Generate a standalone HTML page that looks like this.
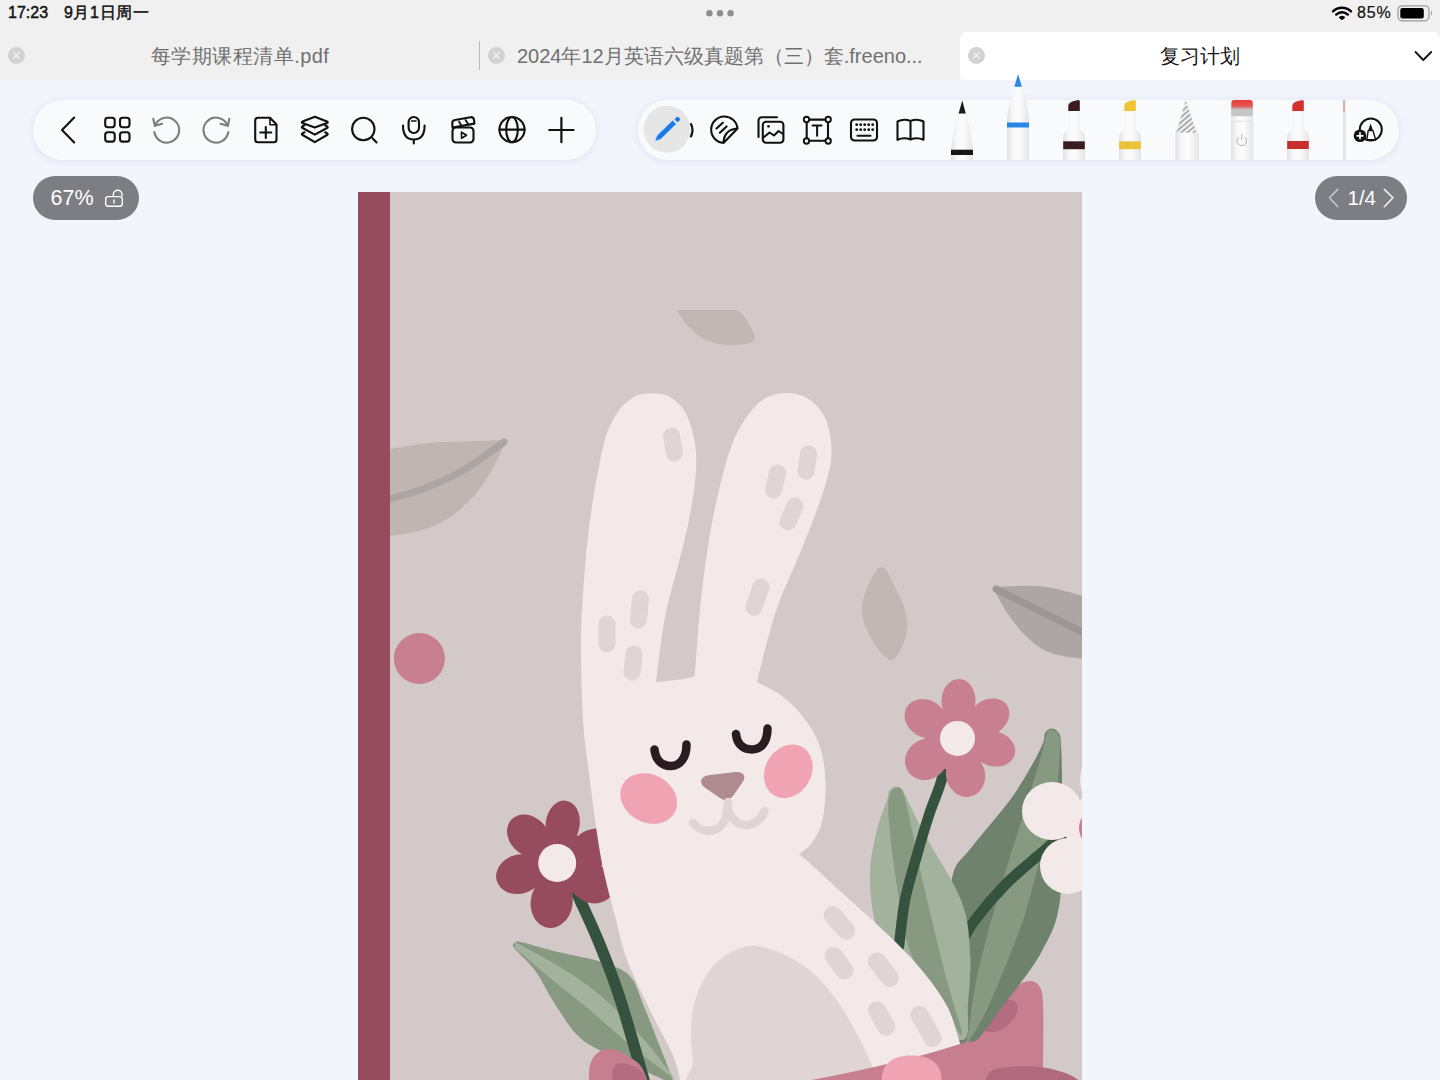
<!DOCTYPE html>
<html><head><meta charset="utf-8">
<style>
*{margin:0;padding:0;box-sizing:border-box}
html,body{width:1440px;height:1080px;overflow:hidden;background:#f2f5fc;font-family:"Liberation Sans",sans-serif}
.abs{position:absolute}
#top{left:0;top:0;width:1440px;height:80px;background:#f0f0f0}
.st{top:3px;font-size:16px;font-weight:normal;-webkit-text-stroke:0.45px #111;color:#111;line-height:20px}
.tabt{top:44px;font-size:20px;color:#707070;line-height:24px;white-space:nowrap}
.xc{width:17px;height:17px;border-radius:50%;background:#d2d2d2}
.xc:before,.xc:after{content:"";position:absolute;left:4.2px;top:7.8px;width:8.6px;height:1.4px;background:#fff;transform:rotate(45deg)}
.xc:after{transform:rotate(-45deg)}
.pill{background:#f9fafc;border-radius:30px;box-shadow:0 1px 10px rgba(30,40,90,0.09)}
.gp{background:#7c7e83;border-radius:22px;color:#fff}
</style></head><body>
<div id="top" class="abs"></div>
<div class="abs st" style="left:8px">17:23</div>
<div class="abs st" style="left:64px;letter-spacing:0.6px">9月1日周一</div>
<svg class="abs" style="left:700px;top:8px" width="40" height="10"><circle cx="9.4" cy="5.3" r="3.2" fill="#8e8e8e"/><circle cx="20" cy="5.3" r="3.2" fill="#8e8e8e"/><circle cx="30.6" cy="5.3" r="3.2" fill="#8e8e8e"/></svg>
<!-- status right -->
<svg class="abs" style="left:1330px;top:5px" width="24" height="17" viewBox="0 0 24 17">
<path d="M3,6.3 A13,13 0 0 1 21,6.3" stroke="#000" stroke-width="2.4" fill="none" stroke-linecap="round"/>
<path d="M6.2,9.6 A8.2,8.2 0 0 1 17.8,9.6" stroke="#000" stroke-width="2.4" fill="none" stroke-linecap="round"/>
<path d="M12,14.8 L9,12.4 A4.6,4.6 0 0 1 15,12.4 Z" fill="#000" stroke="#000" stroke-width="0.8" stroke-linejoin="round"/>
</svg>
<div class="abs st" style="left:1357px;top:3px;-webkit-text-stroke:0.2px #111;letter-spacing:0.8px">85%</div>
<svg class="abs" style="left:1397px;top:5px" width="38" height="17" viewBox="0 0 38 17">
<rect x="1" y="0.8" width="31" height="15" rx="4" fill="none" stroke="#9a9a9a" stroke-width="1.2"/>
<rect x="3.3" y="3" width="23.5" height="10.5" rx="2" fill="#000"/>
<path d="M34,5.5 Q36,8 34,11 Z" fill="#999"/>
</svg>
<!-- tabs -->
<div class="abs xc" style="left:8px;top:47px"></div>
<div class="abs tabt" style="left:151px;letter-spacing:0.45px">每学期课程清单.pdf</div>
<div class="abs" style="left:479px;top:41px;width:1.2px;height:29px;background:#b8b8b8"></div>
<div class="abs xc" style="left:488px;top:47px"></div>
<div class="abs tabt" style="left:517px">2024年12月英语六级真题第（三）套.freeno...</div>
<div class="abs" style="left:960px;top:32px;width:480px;height:48px;background:#fff;border-radius:7px 7px 0 4px"></div>
<div class="abs xc" style="left:968px;top:47px"></div>
<div class="abs tabt" style="left:1160px;color:#151515">复习计划</div>
<svg class="abs" style="left:1413px;top:48px" width="22" height="16" viewBox="0 0 22 16"><path d="M2.5,4 L10.3,12 L18.2,4" stroke="#111" stroke-width="1.8" fill="none" stroke-linecap="round" stroke-linejoin="round"/></svg>

<!-- toolbars -->
<div class="abs pill" style="left:33px;top:100px;width:563px;height:60px"></div>
<div class="abs pill" style="left:638px;top:100px;width:761px;height:60px"></div>

<!-- zoom & page pills -->
<div class="abs gp" style="left:33px;top:176px;width:106px;height:44px"></div>
<div class="abs" style="left:50.5px;top:185px;font-size:21.5px;color:#fff;line-height:26px">67%</div>
<svg class="abs" style="left:100px;top:184px" width="30" height="28" viewBox="100 184 30 28"><g fill="none" stroke="#fff" stroke-width="1.4" stroke-linecap="round">
<rect x="105.7" y="196.6" width="16.6" height="9.6" rx="2.4"/><path d="M113.3,196.4 L113.3,194.6 A4.4,4.4 0 0 1 122.1,194.6 L122.1,195.6"/><path d="M114,199.9 L114,203"/></g></svg>
<div class="abs gp" style="left:1315px;top:176px;width:92px;height:44px"></div>
<div class="abs" style="left:1347.5px;top:185px;font-size:20.5px;color:#fff;line-height:26px">1/4</div>
<svg class="abs" style="left:1320px;top:184px" width="80" height="28" viewBox="1320 184 80 28"><g fill="none" stroke-width="1.5" stroke-linecap="round" stroke-linejoin="round">
<path d="M1337.8,189.4 L1329.4,197.8 L1337.8,206.8" stroke="#c9cacd"/><path d="M1384.3,189.4 L1393,197.8 L1384.3,206.8" stroke="#f4f4f5"/></g></svg>

<!-- left toolbar icons -->
<svg class="abs" style="left:0;top:80px" width="1440" height="100" viewBox="0 80 1440 100">
<g fill="none" stroke="#111" stroke-width="2.1" stroke-linecap="round" stroke-linejoin="round">
<path d="M74.2,117.5 L62,130 L74.2,142.5"/>
<rect x="105.2" y="117.8" width="9.5" height="9.4" rx="2.6"/><rect x="120" y="117.8" width="9.5" height="9.4" rx="2.6"/>
<rect x="105.2" y="132.2" width="9.5" height="9.4" rx="2.6"/><rect x="120" y="132.2" width="9.5" height="9.4" rx="2.6"/>
<g stroke="#7d7d7d"><path d="M154.3,132 A12.5,12.5 0 1 0 155,125.6"/><path d="M153.3,118.7 L154.8,125.7 L162.2,123.7"/>
<path d="M228.35,132 A12.5,12.5 0 1 1 227.65,125.6"/><path d="M229.35,118.7 L227.85,125.7 L220.45,123.7"/></g>
<path d="M258,117.8 L270,117.8 L276.5,124.5 L276.5,139.5 Q276.5,142.3 273.7,142.3 L258,142.3 Q255.2,142.3 255.2,139.5 L255.2,120.6 Q255.2,117.8 258,117.8 Z"/>
<path d="M270,118 L270,124.7 L276.3,124.7" stroke-width="1.6"/>
<path d="M265.8,127 L265.8,138 M260.3,132.5 L271.3,132.5"/>
<path d="M314.8,116.8 L327,121.5 Q328.5,122.2 327,123 L314.8,127.6 L302.6,123 Q301,122.2 302.6,121.5 Z"/>
<path d="M304.5,125.3 L302.6,126.3 Q301,127.2 302.6,128 L314.8,134.6 L327,128 Q328.5,127.2 327,126.3 L325.1,125.3"/>
<path d="M304.5,132.3 L302.6,133.3 Q301,134.2 302.6,135 L314.8,142.2 L327,135 Q328.5,134.2 327,133.3 L325.1,132.3"/>
<circle cx="363.3" cy="129" r="11.2"/><path d="M372.5,138.2 L376.6,142.4"/>
<rect x="408.6" y="117" width="10.4" height="16" rx="5.2"/><path d="M403,125.5 Q403,139.5 413.8,139.5 Q424.6,139.5 424.6,125.5 M413.8,139.5 L413.8,143.5"/>
<path d="M411.6,121 L416,121" stroke-width="1.5"/>
<rect x="452.5" y="127.5" width="21" height="15" rx="3.5"/>
<path d="M452.5,127.5 L452.3,123.5 Q452,120.5 455,120 L470.5,117.2 Q473.5,116.8 474,119.8 L474.4,123.6 L452.5,127.5"/>
<path d="M459,121.5 L461.5,125.8 M465.5,120 L468.5,124.6" stroke-width="1.8"/>
<path d="M461.5,132.2 L461.5,138.2 L466.5,135.2 Z" stroke-width="1.6"/>
<circle cx="512" cy="129.6" r="12.6"/><ellipse cx="512" cy="129.6" rx="5.8" ry="12.6"/><path d="M499.4,129.6 L524.6,129.6"/>
<path d="M561.4,117.8 L561.4,142.2 M549.2,130 L573.6,130" stroke-width="2.2"/>
</g>
<!-- right toolbar icons -->
<circle cx="667" cy="129.3" r="23.5" fill="#e6e6e6"/>
<path d="M654.9,141.2 L657,135.5 L672.6,120.3 L676.3,124 L660.7,139.2 Z" fill="#1a78e8" stroke="#bfe6ff" stroke-width="0.6"/>
<path d="M674.5,119.4 L676.7,117.2 Q677.6,116.4 678.5,117.2 L679.7,118.4 Q680.5,119.3 679.7,120.2 L677.5,122.3 Z" fill="#1a78e8"/>
<path d="M690.6,123.2 Q694.5,130 690.6,137.2" fill="none" stroke="#111" stroke-width="2.2"/>
<g fill="none" stroke="#111" stroke-width="2.1" stroke-linecap="round" stroke-linejoin="round">
<path d="M723.5,142.9 A13.2,13.2 0 1 1 737.5,128.5 L723.5,142.9 Q724,129.5 737.5,128.5"/>
<path d="M716.5,128.6 L722.8,122.8 M719.8,132.7 L726.6,126.4"/>
<path d="M758.5,137 L758.5,121 Q758.5,117.3 762,117.3 L777,117.3"/>
<rect x="762.8" y="121.8" width="20.6" height="21" rx="3.2"/>
<circle cx="768.5" cy="126.3" r="1.4" fill="#111" stroke="none"/>
<path d="M763.5,137.5 L769.5,132.5 L774,135.5 L778.5,131 L783,134"/>
<rect x="806.7" y="119.6" width="21.3" height="21.2"/>
<path d="M812.6,125.5 L821.6,125.5 M817.1,125.5 L817.1,135.8" stroke-width="2"/>
</g>
<g fill="#fafbfc" stroke="#111" stroke-width="1.9">
<circle cx="806.5" cy="119.5" r="2.7"/><circle cx="828.2" cy="119.5" r="2.7"/><circle cx="806.5" cy="141" r="2.7"/><circle cx="828.2" cy="141" r="2.7"/>
</g>
<g fill="none" stroke="#111" stroke-width="2.1" stroke-linecap="round" stroke-linejoin="round">
<rect x="851" y="119.5" width="26" height="21" rx="3.5"/>
<path d="M857.5,135.8 L870.5,135.8"/>
<path d="M897.5,121.5 Q904,118.2 910.5,121 Q917,118.2 923.5,121.5 L923.5,139.8 Q917,137 910.5,139.5 Q904,137 897.5,139.8 Z M910.5,121 L910.5,139.5"/>
</g>
<g fill="#111">
<circle cx="856.7" cy="124.7" r="1.4"/><circle cx="860.7" cy="124.7" r="1.4"/><circle cx="864.7" cy="124.7" r="1.4"/><circle cx="868.7" cy="124.7" r="1.4"/><circle cx="872.7" cy="124.7" r="1.4"/>
<circle cx="856.7" cy="129.7" r="1.4"/><circle cx="860.7" cy="129.7" r="1.4"/><circle cx="864.7" cy="129.7" r="1.4"/><circle cx="868.7" cy="129.7" r="1.4"/><circle cx="872.7" cy="129.7" r="1.4"/>
</g>
</svg>
<svg class="abs" style="left:940px;top:70px" width="470" height="92" viewBox="940 70 470 92">
<defs>
<linearGradient id="bd" x1="0" x2="1" y1="0" y2="0"><stop offset="0" stop-color="#e2e2e4"/><stop offset="0.25" stop-color="#f7f7f8"/><stop offset="0.55" stop-color="#fdfdfd"/><stop offset="1" stop-color="#e4e4e6"/></linearGradient>
<linearGradient id="er" x1="0" x2="0" y1="0" y2="1"><stop offset="0" stop-color="#ee3b3b"/><stop offset="0.35" stop-color="#e45252"/><stop offset="0.6" stop-color="#c9c9c9"/><stop offset="1" stop-color="#c4c4c4"/></linearGradient>
<pattern id="hatch" width="4" height="4" patternUnits="userSpaceOnUse" patternTransform="rotate(-40)"><rect width="4" height="4" fill="#f2f2f2"/><rect width="4" height="1.5" fill="#9a9a9a"/></pattern>
</defs>
<!-- pen1 black fineliner -->
<path d="M958.6,113.3 L965.8,113.3 Q972,135 973,150 L973,160 L951,160 L951,150 Q952.5,135 958.6,113.3 Z" fill="url(#bd)"/>
<path d="M962.2,100.6 L965.8,113.4 L958.6,113.4 Z" fill="#1a1a1a"/>
<rect x="951" y="149.7" width="22" height="5.3" fill="#161616"/>
<!-- pen2 blue -->
<path d="M1014.5,86.7 L1021.8,86.7 Q1028,104 1029,118 L1029,160 L1007,160 L1007,118 Q1008,104 1014.5,86.7 Z" fill="url(#bd)"/>
<path d="M1018.1,74 L1021.9,86.8 L1014.4,86.8 Z" fill="#2b86ea"/>
<rect x="1007" y="122.5" width="22" height="5" fill="#2a86e6"/>
<!-- pen3 brown marker -->
<path d="M1068.3,111 L1079.7,111 L1080,129 Q1085,132 1085,138 L1085,160 L1063,160 L1063,138 Q1063,132 1068,129 Z" fill="url(#bd)"/>
<path d="M1068.3,111 L1068.3,105.5 Q1069,102.5 1073,101.3 L1078.5,100 Q1079.8,100 1079.8,101.5 L1079.8,111 Z" fill="#3a1a1e"/>
<rect x="1063.2" y="141.3" width="21.6" height="7.9" fill="#3c1c1f"/>
<!-- pen4 yellow marker -->
<path d="M1124.3,111 L1135.7,111 L1136,129 Q1141,132 1141,138 L1141,160 L1119,160 L1119,138 Q1119,132 1124,129 Z" fill="url(#bd)"/>
<path d="M1124.3,111 L1124.3,105.5 Q1125,102.5 1129,101.3 L1134.5,100 Q1135.8,100 1135.8,101.5 L1135.8,111 Z" fill="#f1c232"/>
<rect x="1119.2" y="141.3" width="21.6" height="7.9" fill="#ecc23a"/>
<!-- pen5 pencil -->
<rect x="1175.4" y="132.8" width="23.6" height="27.2" fill="url(#bd)"/>
<path d="M1185.8,100.2 L1196.6,132.8 L1176.1,132.8 Z" fill="url(#hatch)"/>
<!-- pen6 eraser -->
<rect x="1231.3" y="100" width="21.5" height="16.5" rx="3" fill="url(#er)"/>
<rect x="1231.3" y="110" width="21.5" height="6.5" fill="#c6c6c6"/>
<rect x="1231" y="116.3" width="22.3" height="43.7" fill="url(#bd)"/>
<path d="M1231.3,121.3 L1252.8,121.3" stroke="#e0e0e0" stroke-width="0.8"/>
<path d="M1238.3,137.5 A4.8,4.8 0 1 0 1245.2,137.5 M1241.7,134.5 L1241.7,139.6" fill="none" stroke="#b0b0b0" stroke-width="1" stroke-linecap="round"/>
<!-- pen7 red marker -->
<path d="M1292.3,111 L1303.7,111 L1304,129 Q1309,132 1309,138 L1309,160 L1287,160 L1287,138 Q1287,132 1292,129 Z" fill="url(#bd)"/>
<path d="M1292.3,111 L1292.3,105.5 Q1293,102.5 1297,101.3 L1302.5,100 Q1303.8,100 1303.8,101.5 L1303.8,111 Z" fill="#d3302e"/>
<rect x="1287.2" y="141" width="21.6" height="8" fill="#c8302f"/>
<!-- partial pen8 -->
<rect x="1343" y="100" width="2.6" height="60" fill="#e2e2e2"/>
<rect x="1343.2" y="100" width="1.6" height="12" fill="#e4a09c"/>
<!-- add pen icon -->
<circle cx="1370.8" cy="129.6" r="11" fill="none" stroke="#111" stroke-width="2"/>
<path d="M1370.6,123.5 L1373,130.6 L1368.2,130.6 Z" fill="#111"/>
<path d="M1368.2,130.6 L1373,130.6 L1375.6,139.8 L1366.8,139.8 Z" fill="#fff" stroke="#111" stroke-width="1.4" stroke-linejoin="round"/>
<circle cx="1360" cy="135.8" r="6.3" fill="#111"/>
<path d="M1360,132.3 L1360,139.3 M1356.5,135.8 L1363.5,135.8" stroke="#fff" stroke-width="1.7"/>
</svg>
<svg class="abs" style="left:0;top:0" width="1440" height="1080" viewBox="0 0 1440 1080"><defs><clipPath id="pg"><rect x="358" y="192" width="724" height="888"/></clipPath></defs><g clip-path="url(#pg)"><rect x="358" y="192" width="724" height="888" fill="#d3c9c8"/><path d="M676.7,310C686.6,310 726.1,310 736,310C737.2,310.8 740,311 743,315C746,319 752.7,329.4 754,334C755.3,338.6 755.5,340.7 751,342.5C746.5,344.3 734.8,345.6 727,345C719.2,344.4 710.5,342.2 704,339C697.5,335.8 692.5,330.8 688,326C683.5,321.2 678.6,312.7 676.7,310Z" fill="#c1b7b5"/><path d="M380,451C388.3,449.7 413.3,444.7 430,443C446.7,441.3 467.3,441.5 480,441C492.7,440.5 501.7,440.2 506,440C504,444.3 499.3,456.7 494,466C488.7,475.3 482.3,486.8 474,496C465.7,505.2 454.7,514.8 444,521C433.3,527.2 420.7,530.5 410,533C399.3,535.5 385,535.5 380,536Z" fill="#bfb6b4"/><path d="M504,442C497,446.8 476,463 462,471C448,479 432.8,485.2 420,490C407.2,494.8 393.3,497.8 385,500C376.7,502.2 372.5,502.5 370,503" fill="none" stroke="#aca5a4" stroke-width="7" stroke-linecap="round" stroke-linejoin="round"/><path d="M882,567C886.8,567.8 892.8,582.5 897,591C901.2,599.5 905.8,609.5 907,618C908.2,626.5 906.7,635 904,642C901.3,649 896.3,660.3 891,660C885.7,659.7 876.8,648 872,640C867.2,632 862.7,621 862,612C861.3,603 864.7,593.5 868,586C871.3,578.5 877.2,566.2 882,567Z" fill="#c1b7b5"/><path d="M994,587C1002.2,586.9 1027,584.7 1043,586.5C1059,588.3 1082.2,596.1 1090,598C1090,608.3 1090,649.7 1090,660C1083.5,658.8 1061.5,656.8 1051,653C1040.5,649.2 1034.2,643.5 1027,637C1019.8,630.5 1013.5,621.8 1008,614C1002.5,606.2 996.3,594 994,590Z" fill="#aca6a5"/><path d="M996,589C1003.8,592.9 1027.3,604.7 1043,612.5C1058.7,620.3 1082.2,632.1 1090,636" fill="none" stroke="#9c9695" stroke-width="7" stroke-linecap="round" stroke-linejoin="round"/><circle cx="419.4" cy="658.5" r="25.5" fill="#c87f91"/><rect x="358" y="192" width="32" height="888" fill="#964b5f"/><path d="M955,1090 L965,1045 C985,1015 1005,992 1020,984 C1033,977 1041,983 1042.5,996 C1044,1010 1043,1040 1043,1090 Z" fill="#c77e91"/><ellipse cx="1000" cy="1016" rx="21" ry="12" transform="rotate(-40 1000 1016)" fill="#b46c80"/><path d="M1043,743C1045.2,737.7 1043.7,735.4 1045,733C1046.3,730.6 1048.8,728.7 1051,728.5C1053.2,728.3 1056.3,729.4 1058,732C1059.7,734.6 1060.3,732.7 1061,744C1061.7,755.3 1062.2,774 1062,800C1061.8,826 1063.3,874.8 1060,900C1056.7,925.2 1051.2,933.8 1042,951C1032.8,968.2 1017.8,986.8 1005,1003C992.2,1019.2 975,1048.5 965,1048C955,1047.5 948,1019.7 945,1000C942,980.3 945.7,951 947,930C948.3,909 949,887.7 953,874C957,860.3 961.5,860.3 971,848C980.5,835.7 999.8,813.8 1010,800C1020.2,786.2 1026.5,774.5 1032,765C1037.5,755.5 1040.8,748.3 1043,743Z" fill="#6f826e"/><path d="M1045,740C1046.3,735.2 1046.5,732.7 1048,731C1049.5,729.3 1052.2,729.2 1054,730C1055.8,730.8 1058,732.7 1059,736C1060,739.3 1060.8,737.8 1060,750C1059.2,762.2 1058,788.3 1054,809C1050,829.7 1041.5,854.5 1036,874C1030.5,893.5 1028.7,904.5 1021,926C1013.3,947.5 999,983.3 990,1003C981,1022.7 970.5,1039.7 967,1044C963.5,1048.3 967.3,1040.2 969,1029C970.7,1017.8 972.3,998.5 977,977C981.7,955.5 989.7,925.8 997,900C1004.3,874.2 1013.8,845.3 1021,822C1028.2,798.7 1036,773.7 1040,760C1044,746.3 1043.7,744.8 1045,740Z" fill="#879980"/><path d="M1090,815C1085.3,818.5 1070.3,829.5 1062,836C1053.7,842.5 1049.5,845.8 1040,854C1030.5,862.2 1015.8,874 1005,885C994.2,896 982.5,910 975,920C967.5,930 962.5,940.8 960,945" fill="none" stroke="#34523e" stroke-width="10.5" stroke-linecap="round" stroke-linejoin="round"/><path d="M887,800C889,793.5 887.6,793.2 889,791C890.4,788.8 893.3,786.8 895.5,786.5C897.7,786.2 900.2,787.2 902,789C903.8,790.8 902.2,789.3 906,797C909.8,804.7 915.8,817.8 925,835C934.2,852.2 953.5,880.7 961,900C968.5,919.3 968.8,933.8 970,951C971.2,968.2 969.5,988.2 968,1003C966.5,1017.8 972.3,1040.5 961,1040C949.7,1039.5 914.2,1019 900,1000C885.8,981 881,947 876,926C871,905 869.8,890 870,874C870.2,858 874.2,842.3 877,830C879.8,817.7 885,806.5 887,800Z" fill="#a2b29c"/><path d="M895.5,788C897.8,787.3 900.2,786 903,793C905.8,800 908.5,814.3 912,830C915.5,845.7 918.3,862.5 924,887C929.7,911.5 939.7,952.3 946,977C952.3,1001.7 963,1031.2 962,1035C961,1038.8 948.7,1014 940,1000C931.3,986 917.3,971 910,951C902.7,931 899.5,901.5 896,880C892.5,858.5 890.2,835.8 889,822C887.8,808.2 887.9,802.7 889,797C890.1,791.3 893.2,788.7 895.5,788Z" fill="#879980"/><path d="M950,750C948.3,755.8 943.5,774.2 940,785C936.5,795.8 932.8,803.3 929,815C925.2,826.7 921,840.8 917,855C913,869.2 908,884.8 905,900C902,915.2 900,938.3 899,946" fill="none" stroke="#34523e" stroke-width="10.5" stroke-linecap="round" stroke-linejoin="round"/><ellipse cx="958.5" cy="700.9" rx="17" ry="22" transform="rotate(1.5 958.5 700.9)" fill="#c87f91"/><ellipse cx="988.6" cy="717.4" rx="17.5" ry="22" transform="rotate(56 988.6 717.4)" fill="#c87f91"/><ellipse cx="993.5" cy="748.7" rx="17.5" ry="22" transform="rotate(106 993.5 748.7)" fill="#c87f91"/><ellipse cx="965.6" cy="775" rx="19.5" ry="22" transform="rotate(167.5 965.6 775)" fill="#c87f91"/><ellipse cx="926.4" cy="759.4" rx="20" ry="22" transform="rotate(236 926.4 759.4)" fill="#c87f91"/><ellipse cx="925.7" cy="718.5" rx="18.5" ry="22" transform="rotate(302 925.7 718.5)" fill="#c87f91"/><circle cx="957.5" cy="738.4" r="33" fill="#c87f91"/><circle cx="957.5" cy="738.4" r="17.5" fill="#f3e9e9"/><ellipse cx="1052" cy="811" rx="30" ry="29" transform="rotate(0 1052 811)" fill="#f3e9e9"/><circle cx="1068" cy="866" r="28" fill="#f3e9e9"/><ellipse cx="1098" cy="780" rx="18" ry="26" transform="rotate(0 1098 780)" fill="#f3e9e9"/><circle cx="1099" cy="828" r="34" fill="#f3e9e9"/><circle cx="1099" cy="828" r="20" fill="#c87f91"/><path d="M517.5,941C524.7,942.9 546.5,949.1 560.6,952.6C574.7,956.1 590.6,958.4 602.2,962.3C613.8,966.2 623,968.9 630,976.2C637,983.6 639.3,995.6 643.9,1006.4C648.5,1017.2 652.6,1027.9 657.8,1041C663,1054.1 672.1,1077.7 675,1085C668.7,1082.1 648.7,1072.8 637,1067.5C625.3,1062.2 614.8,1058.2 605,1053C595.2,1047.8 586.3,1044.2 578,1036C569.7,1027.8 562,1014.7 555,1004C548,993.3 542.3,980.5 536,971.7C529.7,962.9 520.8,955.5 517,951C513.2,946.5 512.9,946.7 513,945C513.1,943.3 516.8,941.7 517.5,941Z" fill="#879980"/><path d="M515,942C522.5,946.2 545.8,958.2 560,967C574.2,975.8 586.7,983.7 600,995C613.3,1006.3 627.3,1020.8 640,1035C652.7,1049.2 670,1072.5 676,1080C668.3,1074.2 644.3,1056.7 630,1045C615.7,1033.3 602.5,1020.5 590,1010C577.5,999.5 567.5,992.3 555,982C542.5,971.7 521.7,953.7 515,948Z" fill="#a2b29c"/><path d="M566,870C568.3,875 574.3,887.5 580,900C585.7,912.5 593.3,928.4 600,945C606.7,961.6 612.8,976.1 620.3,999.4C627.8,1022.7 641.1,1070.7 645.3,1085" fill="none" stroke="#34523e" stroke-width="11.5" stroke-linecap="round" stroke-linejoin="round"/><ellipse cx="562.7" cy="823.9" rx="17" ry="23.5" transform="rotate(8 562.7 823.9)" fill="#964b5f"/><ellipse cx="528.5" cy="835.8" rx="19" ry="23.5" transform="rotate(-46.5 528.5 835.8)" fill="#964b5f"/><ellipse cx="519.3" cy="874.2" rx="19.5" ry="23.5" transform="rotate(253.5 519.3 874.2)" fill="#964b5f"/><ellipse cx="551.7" cy="902.1" rx="21" ry="26" transform="rotate(188 551.7 902.1)" fill="#964b5f"/><ellipse cx="591.4" cy="882.8" rx="19.5" ry="23.5" transform="rotate(120 591.4 882.8)" fill="#964b5f"/><ellipse cx="593.8" cy="848.2" rx="19" ry="23.5" transform="rotate(68 593.8 848.2)" fill="#964b5f"/><circle cx="557.2" cy="863" r="34" fill="#964b5f"/><circle cx="557.2" cy="863" r="19" fill="#f3e9e9"/><path d="M653,393C650.2,393.5 641.5,393.3 636,396C630.5,398.7 624.8,402.8 620,409C615.2,415.2 610.6,423 607,433C603.4,443 601.3,454.5 598.5,469C595.7,483.5 592.4,501.5 590,520C587.6,538.5 585.5,560 584,580C582.5,600 581.2,616.7 581,640C580.8,663.3 581.7,697.8 583,720C584.3,742.2 586.5,753 589,773C591.5,793 595.3,822.7 598,840C600.7,857.3 602,863.7 605,877C608,890.3 612.3,906.2 616,920C619.7,933.8 621.3,945 627,960C632.7,975 642.2,993.7 650,1010C657.8,1026.3 668.7,1044.7 674,1058C679.3,1071.3 680.7,1084.7 682,1090L975,1090L960,1043C958,1037.2 953.8,1019.5 948,1008C942.2,996.5 934.1,985.3 925,974C915.9,962.7 906,952.3 893.5,940C881,927.7 864.5,913.3 850,900C835.5,886.7 815,867.7 806.5,860C798,852.3 800.2,855 799,854C801,852.3 807.2,849.3 811,844C814.8,838.7 819.6,832 822,822C824.4,812 825.9,796.5 825.6,784C825.3,771.5 823.6,758 820,747C816.4,736 810.3,726.5 804,718C797.7,709.5 789.8,702 782,696C774.2,690 761.2,684.3 757,682C760.2,670.2 768.3,633.7 776,611C783.7,588.3 794.8,566.8 803,546C811.2,525.2 820.2,501.7 825,486C829.8,470.3 831.3,463 831.5,452C831.7,441 829.6,428.7 826,420C822.4,411.3 816.3,404.5 810,400C803.7,395.5 795.7,393.2 788,393C780.3,392.8 771,394.8 764,399C757,403.2 751.5,410 746,418C740.5,426 735.5,435 731,447C726.5,459 722.7,474.5 719,490C715.3,505.5 712,521.3 709,540C706,558.7 703.1,579.3 700.7,602C698.3,624.7 695.8,663.7 694.8,676C691.7,677.5 682.5,679.2 676,680C669.5,680.8 659.3,681.7 656,682C657.5,671.2 661.2,636.7 665,617C668.8,597.3 674.3,581 678.5,564C682.7,547 687.1,530.7 690,515C692.9,499.3 695.3,482.8 696,470C696.7,457.2 696,448 694,438C692,428 688.3,417 684,410C679.7,403 673.2,398.8 668,396C662.8,393.2 655.5,393.5 653,393Z" fill="#f3e9e9"/><line x1="671.5" y1="436" x2="674.5" y2="453" stroke="#e0d4d5" stroke-width="17" stroke-linecap="round"/><line x1="607" y1="624" x2="607" y2="644" stroke="#e0d4d5" stroke-width="17" stroke-linecap="round"/><line x1="640.5" y1="599" x2="638.5" y2="620" stroke="#e0d4d5" stroke-width="17" stroke-linecap="round"/><line x1="634" y1="654" x2="632" y2="672" stroke="#e0d4d5" stroke-width="17" stroke-linecap="round"/><line x1="808.5" y1="454" x2="806" y2="471" stroke="#e0d4d5" stroke-width="17" stroke-linecap="round"/><line x1="777.5" y1="473" x2="773.5" y2="490" stroke="#e0d4d5" stroke-width="17" stroke-linecap="round"/><line x1="795" y1="506" x2="788" y2="522" stroke="#e0d4d5" stroke-width="17" stroke-linecap="round"/><line x1="761" y1="587" x2="754" y2="607" stroke="#e0d4d5" stroke-width="17" stroke-linecap="round"/><path d="M748,946C759.8,944.3 773.8,950.2 785,955C796.2,959.8 805.8,966.7 815,975C824.2,983.3 832.5,994.2 840,1005C847.5,1015.8 854,1028.3 860,1040C866,1051.7 872.3,1065 876,1075C879.7,1085 911.3,1095.8 882,1100C852.7,1104.2 731.5,1106.7 700,1100C668.5,1093.3 694.5,1071.7 693,1060C691.5,1048.3 690.5,1040.3 691,1030C691.5,1019.7 692.2,1008.8 696,998C699.8,987.2 705.3,973.7 714,965C722.7,956.3 736.2,947.7 748,946Z" fill="#e0d4d5"/><line x1="832.6" y1="915" x2="846.3" y2="930.7" stroke="#e0d4d5" stroke-width="18" stroke-linecap="round"/><line x1="833.6" y1="956" x2="844.5" y2="970.5" stroke="#e0d4d5" stroke-width="18" stroke-linecap="round"/><line x1="877" y1="961.5" x2="889.8" y2="977.8" stroke="#e0d4d5" stroke-width="18" stroke-linecap="round"/><line x1="877" y1="1010.4" x2="886.2" y2="1026.7" stroke="#e0d4d5" stroke-width="18" stroke-linecap="round"/><line x1="919.6" y1="1015" x2="932.6" y2="1038" stroke="#e0d4d5" stroke-width="18" stroke-linecap="round"/><path d="M654.5,749.5 C655.5,760 662,766 671,766 C680,766 686.5,758 686.5,744.5" fill="none" stroke="#2b1c24" stroke-width="8.5" stroke-linecap="round" stroke-linejoin="round"/><path d="M736,734 C737,744 743,749.5 752,749.5 C761,749.5 767.5,742 767.5,728.5" fill="none" stroke="#2b1c24" stroke-width="8.5" stroke-linecap="round" stroke-linejoin="round"/><ellipse cx="648.7" cy="798.5" rx="29.5" ry="24" transform="rotate(28 648.7 798.5)" fill="#f0a3b3"/><ellipse cx="788.3" cy="771.3" rx="23" ry="28" transform="rotate(30 788.3 771.3)" fill="#f0a3b3"/><path d="M704,787 C698,781 702,775.5 710,775 L735,772 C744,771 747,777 742,783 L733,796 C729,801 724,801 720,798 Z" fill="#af8a91"/><path d="M693,823 C700,832 714,834 722,825 C727,818 728,810 728,802" fill="none" stroke="#e0d4d5" stroke-width="8.5" stroke-linecap="round" stroke-linejoin="round"/><path d="M729,813 C735,824 744,827 752,824 C759,821 763,815 764.5,811" fill="none" stroke="#e0d4d5" stroke-width="8.5" stroke-linecap="round" stroke-linejoin="round"/><path d="M589,1090C589.2,1085.8 588.3,1071.3 590,1065C591.7,1058.7 594.8,1054.5 599,1052C603.2,1049.5 608.2,1047.8 615,1050C621.8,1052.2 634.2,1058.3 640,1065C645.8,1071.7 648.3,1085.8 650,1090" fill="#c77e91"/><path d="M612,1090C612.2,1086.7 611.7,1074.5 613,1070C614.3,1065.5 615.5,1063 620,1063C624.5,1063 635,1065.5 640,1070C645,1074.5 648.3,1086.7 650,1090" fill="#b46c80"/><path d="M811,1090 L811.5,1080 C850,1073 920,1058 967.6,1041.5 L1043,1041 L1043,1090 Z" fill="#c77e91"/><path d="M881.7,1090 L881.7,1080 C881.7,1062 895,1055.5 911.6,1055.5 C928,1055.5 941.5,1062 941.5,1080 L941.5,1090 Z" fill="#f0a3b3"/><path d="M983,1090C984.2,1087 985.5,1075.8 990,1072C994.5,1068.2 1001.7,1067.8 1010,1067C1018.3,1066.2 1030,1065.7 1040,1067C1050,1068.3 1061.7,1071.2 1070,1075C1078.3,1078.8 1086.7,1087.5 1090,1090" fill="#b06a7e"/></g></svg>
</body></html>
